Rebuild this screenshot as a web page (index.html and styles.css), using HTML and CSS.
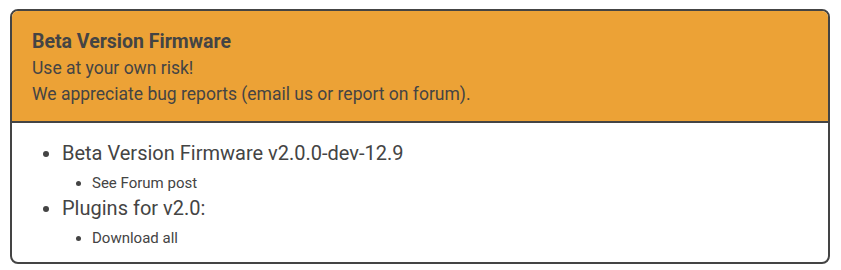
FILE: index.html
```html
<!DOCTYPE html>
<html lang="en">
  <head>
    <meta charset="UTF-8" />
    <meta name="viewport" content="width=device-width, initial-scale=1.0" />
    <title>Beta Firmware</title>
    <link rel="stylesheet" href="styles.css">
  </head>

  <body>
    <div class="card">
      <!-- Warning Header -->
      <div class="card-header">
        <div class="title">Beta Version Firmware</div>
        <div>Use at your own risk!</div>
        <div>We appreciate bug reports (email us or report on forum).</div>
      </div>

      <!-- Downloads -->
      <div class="card-body">
        <ul class="main-list">
          <li>
            Beta Version Firmware v2.0.0-dev-12.9
            <ul class="sub-list">
              <li>See Forum post</li>
            </ul>
          </li>
          <li>
            Plugins for v2.0:
            <ul class="sub-list">
              <li>Download all</li>
            </ul>
          </li>
        </ul>
      </div>
    </div>
  </body>
</html>
```

FILE: styles.css
```css
/* Global Styles */
body {
  font-family: Roboto, "Noto Sans", sans-serif;
  color: #444;
  background-color: #fff;
  margin: 9px 10px;
}

/* Card */
.card {
  border: 2px solid #444;
  border-radius: 8px;
  overflow: hidden;
  width: 816px;
}

.card-header {
  background-color: #eca236;
  border-bottom: 2px solid #444;
  padding: 18px 20px 14px;
  font-size: 17.5px;
  line-height: 26px;
}

.title {
  font-size: 19.5px;
  font-weight: bold;
}

.card-body {
  padding: 15px 20px 14px;
}

.main-list {
  margin: 0;
  padding-left: 30px;
  font-size: 20px;
  line-height: 30px;
}

.sub-list {
  margin: 0;
  padding-left: 30px;
  font-size: 15px;
  line-height: 20px;
  padding-top: 5px;
  list-style: disc;
}
```
